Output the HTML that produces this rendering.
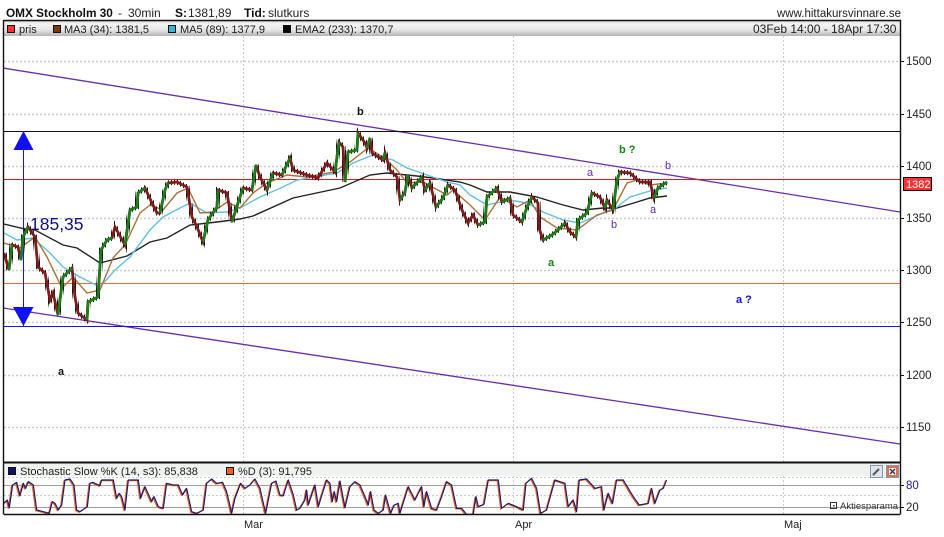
<!DOCTYPE html>
<html><head><meta charset="utf-8"><style>
html,body{margin:0;padding:0;background:#fff}
#c{position:relative;width:944px;height:537px;overflow:hidden;font-family:"Liberation Sans",sans-serif;color:#222;background:#fff}
</style></head><body><div id="c">
<svg width="944" height="537" viewBox="0 0 944 537" xmlns="http://www.w3.org/2000/svg" style="position:absolute;left:0;top:0;font-family:'Liberation Sans',sans-serif">
<defs>
<linearGradient id="h" x1="0" y1="0" x2="0" y2="1"><stop offset="0" stop-color="#d8d8d8"/><stop offset=".2" stop-color="#f4f4f4"/><stop offset=".6" stop-color="#e6e6e6"/><stop offset="1" stop-color="#b4b4b4"/></linearGradient>
<pattern id="w" width="3" height="40" patternUnits="userSpaceOnUse"><rect width="1" height="40" fill="#111"/></pattern>
<clipPath id="m"><rect x="4" y="36" width="896" height="426"/></clipPath>
<clipPath id="s"><rect x="4" y="476" width="896" height="38"/></clipPath>
</defs>
<text x="6" y="17" font-size="11.8" font-weight="bold" fill="#111">OMX Stockholm 30</text>
<text x="118" y="17" font-size="12" fill="#222">-</text>
<text x="128" y="17" font-size="12" fill="#222">30min</text>
<text x="175" y="17" font-size="12" font-weight="bold" fill="#111">S:</text>
<text x="188" y="17" font-size="12" fill="#222">1381,89</text>
<text x="244" y="17" font-size="12" font-weight="bold" fill="#111">Tid:</text>
<text x="268" y="17" font-size="12" fill="#222">slutkurs</text>
<text x="777" y="17" font-size="11.5" fill="#222">www.hittakursvinnare.se</text>

<rect x="4" y="21" width="896" height="15" fill="url(#h)"/>
<rect x="7.5" y="25.5" width="7" height="7" fill="#f33" stroke="#111"/>
<rect x="53.5" y="25.5" width="7" height="7" fill="#7a3c0a" stroke="#111"/>
<rect x="168.5" y="25.5" width="7" height="7" fill="#3cb4d8" stroke="#111"/>
<rect x="283.5" y="25.5" width="7" height="7" fill="#000" stroke="#111"/>
<g font-size="11" fill="#222">
<text x="19" y="33">pris</text>
<text x="64" y="33">MA3 (34): 1381,5</text>
<text x="180" y="33">MA5 (89): 1377,9</text>
<text x="295" y="33">EMA2 (233): 1370,7</text>
<text x="753" y="33" font-size="12">03Feb 14:00 - 18Apr 17:30</text>
</g>

<g stroke="#ccc" fill="none" stroke-dasharray="2 2">
<path stroke-width="1.5" d="M4 61.5H900M4 114.5H900M4 166.5H900M4 218.5H900M4 270.5H900M4 322.5H900M4 375.5H900M4 427.5H900"/>
<path d="M243.5 36V462M513.5 36V462M783.5 36V462"/>
<path d="M243.5 464V514M513.5 464V514M783.5 464V514"/>
</g>

<g clip-path="url(#m)" fill="none">
<path d="M3 68L900 212" stroke="#6a2ea8" stroke-width="1.3"/>
<path d="M3 308L900 444" stroke="#6a2ea8" stroke-width="1.3"/>
<path d="M4 131.5H900" stroke="#111"/>
<path d="M4 179.5H900" stroke="#e01818"/>
<path d="M4 283.5H900" stroke="#f06a2a"/>
<path d="M4 326.5H900" stroke="#1414e8"/>
<path d="M23.5 131V326" stroke="#1414e8" stroke-width="1"/>

<path d="M4 224L25 229L35 230L63 245L77 248L100 263L127 256L150 242L167 238L190 225L217 222L240 219L253 216L293 198L340 188L370 175L387 173L417 176L440 179L460 182L470 185L487 192L510 192L537 197L563 205L583 210L603 208L617 208L637 202L650 198L667 196" stroke="#222" stroke-width="1.4"/>
<path d="M4 233L17 240L33 238L50 253L63 267L80 277L100 287L115 270L130 257L150 230L163 217L180 208L190 203L207 213L227 212L240 208L260 197L283 187L297 180L337 173L353 163L373 155L393 160L407 168L427 175L447 182L460 185L470 195L487 205L510 200L527 203L543 212L563 220L580 223L603 213L617 207L630 197L653 190L667 188" stroke="#62bfdc" stroke-width="1.4"/>
<path d="M4 243L20 248L35 237L47 257L62 288L73 277L87 293L100 290L113 258L125 245L140 213L150 205L163 210L177 193L188 188L200 213L213 212L227 202L240 208L253 193L267 183L287 175L307 177L333 172L350 162L368 148L383 157L397 170L407 183L423 182L447 195L453 190L470 205L485 220L500 197L517 207L530 200L540 217L557 228L577 230L597 215L613 210L627 183L637 180L650 185L667 183" stroke="#a8703c" stroke-width="1.4"/>

<path d="M4 253L9 270L12 245L18 247L21 260L23 237L28 227L35 237L38 267L45 273L50 300L53 293L58 315L63 277L72 268L75 297L78 313L87 320L88 302L98 297L101 250L107 240L112 238L115 227L125 245L130 210L137 207L138 193L145 188L152 203L157 213L160 213L165 190L168 183L177 182L187 187L192 217L197 227L203 242L208 220L217 207L218 190L227 193L232 222L238 203L243 188L252 190L256 165L260 177L267 190L273 173L282 175L290 158L293 170L307 175L318 178L327 163L335 172L339 142L343 147L345 182L348 152L357 150L358 133L365 143L367 148L370 138L372 153L383 160L385 153L390 170L397 177L400 200L405 192L408 175L412 188L422 177L425 190L430 183L436 207L443 198L448 185L455 190L462 210L468 223L473 215L478 225L485 222L487 197L497 188L502 202L510 198L513 215L522 222L527 207L532 197L538 203L539 228L543 240L552 235L558 230L565 223L570 232L576 237L578 220L587 213L592 193L600 197L605 208L607 200L613 210L617 180L620 172L630 173L640 182L650 182L654 198L658 188L667 182" stroke="url(#w)" stroke-width="5"/>
<path d="M4 253L9 270L12 245L18 247L21 260L23 237L28 227L35 237L38 267L45 273L50 300L53 293L58 315L63 277L72 268L75 297L78 313L87 320L88 302L98 297L101 250L107 240L112 238L115 227L125 245L130 210L137 207L138 193L145 188L152 203L157 213L160 213L165 190L168 183L177 182L187 187L192 217L197 227L203 242L208 220L217 207L218 190L227 193L232 222L238 203L243 188L252 190L256 165L260 177L267 190L273 173L282 175L290 158L293 170L307 175L318 178L327 163L335 172L339 142L343 147L345 182L348 152L357 150L358 133L365 143L367 148L370 138L372 153L383 160L385 153L390 170L397 177L400 200L405 192L408 175L412 188L422 177L425 190L430 183L436 207L443 198L448 185L455 190L462 210L468 223L473 215L478 225L485 222L487 197L497 188L502 202L510 198L513 215L522 222L527 207L532 197L538 203L539 228L543 240L552 235L558 230L565 223L570 232L576 237L578 220L587 213L592 193L600 197L605 208L607 200L613 210L617 180L620 172L630 173L640 182L650 182L654 198L658 188L667 182" stroke="#7c1c1c" stroke-width="2.8"/>
<path d="M9 270L12 245M21 260L23 237L28 227M58 315L63 277L72 268M87 320L88 302L98 297L101 250L107 240L112 238M125 245L130 210L137 207L138 193L145 188M160 213L165 190L168 183M203 242L208 220L217 207L218 190M232 222L238 203L243 188M252 190L256 165M267 190L273 173M282 175L290 158M335 172L339 142M345 182L348 152L357 150L358 133M367 148L370 138M383 160L385 153M400 200L405 192L408 175M412 188L422 177M425 190L430 183M436 207L443 198L448 185M478 225L485 222L487 197L497 188M502 202L510 198M522 222L527 207L532 197M543 240L552 235L558 230L565 223M576 237L578 220L587 213L592 193M605 208L607 200M613 210L617 180L620 172M654 198L658 188L667 182" stroke="#1c7c1c" stroke-width="2.8"/>
</g>

<path d="M23.5 131L33.5 150H13.5Z" fill="#1010f0"/>
<path d="M13 307H33.5L23.5 326Z" fill="#1010f0"/>
<text x="30" y="230" font-size="17.5" fill="#10107c">185,35</text>

<g font-size="11" font-weight="bold">
<text x="357" y="115" fill="#111">b</text>
<text x="58" y="375" fill="#111">a</text>
<text x="619" y="153" fill="#118811">b ?</text>
<text x="548" y="266" fill="#118811">a</text>
<text x="736" y="303" fill="#1010d0">a ?</text>
</g>
<g font-size="11" fill="#6a2ea8">
<text x="587" y="176">a</text>
<text x="611" y="228">b</text>
<text x="650" y="213">a</text>
<text x="665" y="169">b</text>
</g>

<rect x="4" y="463" width="896" height="13" fill="#f0f2f0"/>
<rect x="8.5" y="467.5" width="7" height="7" fill="#101060" stroke="#111"/>
<rect x="226.5" y="467.5" width="7" height="7" fill="#f06020" stroke="#111"/>
<text x="20" y="475" font-size="11" fill="#222">Stochastic Slow %K (14, s3): 85,838</text>
<text x="238" y="475" font-size="11" fill="#222">%D (3): 91,795</text>
<path d="M4 477.5H900M4 495.5H900" stroke="#ccc" stroke-dasharray="2 2"/>
<path d="M4 485.5H900M4 507.5H900" stroke="#a0a0a0"/>

<g clip-path="url(#s)"><g transform="translate(0,455) scale(.3333)" fill="none" stroke-linejoin="round">
<path transform="translate(-3,2)" stroke="#f06020" stroke-width="3.6" d="M12 145L22 135L28 158L38 90L50 82L60 122L70 85L77 100L85 80L100 90L110 165L130 170L148 175L157 140L165 145L175 165L185 150L195 75L210 72L222 90L230 165L240 170L262 155L270 85L278 82L300 92L305 75L340 75L350 130L358 115L365 125L375 165L385 75L415 75L422 130L435 95L455 140L462 125L475 155L490 160L500 85L520 90L535 90L548 120L560 100L575 170L590 175L610 165L620 85L635 72L650 85L668 82L680 110L695 175L705 130L722 85L735 100L750 90L765 72L780 100L797 175L815 85L828 78L840 120L850 122L865 75L880 120L890 165L900 160L915 135L920 105L925 150L945 90L955 155L980 75L990 85L997 140L1003 110L1010 140L1020 78L1035 158L1050 95L1065 80L1080 90L1095 125L1105 150L1112 110L1122 165L1135 175L1150 165L1157 120L1172 175L1183 150L1195 145L1200 175L1225 95L1245 135L1265 95L1272 155L1280 110L1295 160L1310 165L1325 125L1340 80L1355 90L1370 160L1385 160L1400 178L1420 178L1428 125L1435 155L1452 148L1465 75L1495 75L1505 160L1525 145L1550 155L1570 165L1578 85L1595 70L1610 100L1622 175L1640 165L1665 75L1695 85L1705 155L1720 135L1730 170L1738 75L1760 72L1785 100L1805 95L1812 165L1825 115L1838 145L1850 75L1870 75L1885 100L1900 125L1918 150L1945 145L1955 100L1965 145L1980 105L1990 100L2000 75"/>
<path stroke="#1c1c70" stroke-width="3.6" d="M12 145L22 135L28 158L38 90L50 82L60 122L70 85L77 100L85 80L100 90L110 165L130 170L148 175L157 140L165 145L175 165L185 150L195 75L210 72L222 90L230 165L240 170L262 155L270 85L278 82L300 92L305 75L340 75L350 130L358 115L365 125L375 165L385 75L415 75L422 130L435 95L455 140L462 125L475 155L490 160L500 85L520 90L535 90L548 120L560 100L575 170L590 175L610 165L620 85L635 72L650 85L668 82L680 110L695 175L705 130L722 85L735 100L750 90L765 72L780 100L797 175L815 85L828 78L840 120L850 122L865 75L880 120L890 165L900 160L915 135L920 105L925 150L945 90L955 155L980 75L990 85L997 140L1003 110L1010 140L1020 78L1035 158L1050 95L1065 80L1080 90L1095 125L1105 150L1112 110L1122 165L1135 175L1150 165L1157 120L1172 175L1183 150L1195 145L1200 175L1225 95L1245 135L1265 95L1272 155L1280 110L1295 160L1310 165L1325 125L1340 80L1355 90L1370 160L1385 160L1400 178L1420 178L1428 125L1435 155L1452 148L1465 75L1495 75L1505 160L1525 145L1550 155L1570 165L1578 85L1595 70L1610 100L1622 175L1640 165L1665 75L1695 85L1705 155L1720 135L1730 170L1738 75L1760 72L1785 100L1805 95L1812 165L1825 115L1838 145L1850 75L1870 75L1885 100L1900 125L1918 150L1945 145L1955 100L1965 145L1980 105L1990 100L2000 75"/>
</g></g>

<path d="M4 20.5H901" stroke="#111" stroke-width="1.4"/>
<path d="M3.5 20V514.5M900.5 20V514.5" stroke="#111" stroke-width="1.4"/>
<path d="M4 462.5H900" stroke="#111" stroke-width="2"/>
<path d="M4 514.5H900" stroke="#111" stroke-width="1.4"/>
<path d="M900 61.5h4M900 114.5h4M900 166.5h4M900 218.5h4M900 270.5h4M900 322.5h4M900 375.5h4M900 427.5h4M900 485.5h4M900 507.5h4" stroke="#111"/>
<g font-size="11.5" fill="#222">
<text x="906" y="65">1500</text>
<text x="906" y="118">1450</text>
<text x="906" y="170">1400</text>
<text x="906" y="222">1350</text>
<text x="906" y="274">1300</text>
<text x="906" y="326">1250</text>
<text x="906" y="379">1200</text>
<text x="906" y="431">1150</text>
<text x="906" y="489" fill="#1c1c90">80</text>
<text x="906" y="511">20</text>
</g>
<rect x="903.5" y="177.5" width="28" height="13" fill="#f33" stroke="#111"/>
<text x="906" y="188" font-size="11" fill="#fff">1382</text>

<g font-size="11" fill="#222">
<text x="244" y="528">Mar</text>
<text x="515" y="528">Apr</text>
<text x="784" y="528">Maj</text>
</g>
<text x="840" y="509" font-size="9.5" fill="#333">Aktiesparama</text>
<rect x="830.5" y="502.5" width="6" height="6" fill="none" stroke="#333"/>
<rect x="833" y="505" width="1.5" height="1.5" fill="#333"/>
<rect x="870.5" y="465.5" width="12" height="12" fill="#dde6ee" stroke="#8899aa"/>
<path d="M873 475L879 469" stroke="#555" stroke-width="2"/>
<rect x="886.5" y="465.5" width="12" height="12" fill="#d8705a" stroke="#8899aa"/>
<rect x="889" y="468" width="7" height="7" fill="#eee"/>
<path d="M890 469L895 474M895 469L890 474" stroke="#333" stroke-width="1.3"/>
</svg>
</div></body></html>
